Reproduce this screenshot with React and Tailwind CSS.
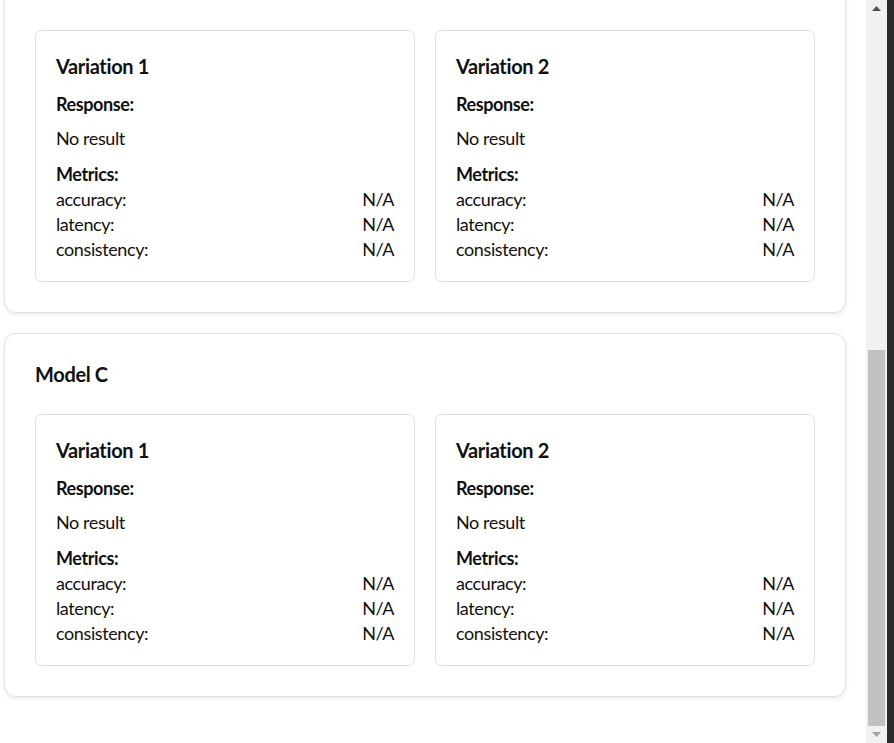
import React from "react";

const METRICS = ["accuracy", "latency", "consistency"];

function VariationCard({ title }) {
  return (
    <div className="border border-[#e3e3e3] rounded-[6px] bg-white px-[20px] pt-[23px] pb-[19px]">
      <h3 className="text-[20px] leading-[25px] font-bold tracking-[-0.35px]">{title}</h3>
      <p className="mt-[13px] font-bold">Response:</p>
      <p className="mt-[9px]">No result</p>
      <p className="mt-[11px] font-bold">Metrics:</p>
      {METRICS.map((m) => (
        <div key={m} className="flex justify-between">
          <span>{m}:</span>
          <span>N/A</span>
        </div>
      ))}
    </div>
  );
}

function ModelCard({ name }) {
  return (
    <div className="border border-[#e2e2e2] rounded-[12px] bg-white shadow-[0_2px_4px_rgba(0,0,0,0.08)] p-[30px]">
      <h2 className="text-[20px] leading-[20px] font-bold tracking-[-0.35px] mb-[30px]">{name}</h2>
      <div className="grid grid-cols-2 gap-[20px]">
        <VariationCard title="Variation 1" />
        <VariationCard title="Variation 2" />
      </div>
    </div>
  );
}

function Scrollbar() {
  return (
    <div className="w-[21px] h-full bg-[#f1f1f1] flex flex-col items-center">
      <div className="h-[17px] flex items-center justify-center">
        <svg width="9" height="5" viewBox="0 0 9 5"><path d="M0 5 L4.5 0 L9 5 Z" fill="#505050" /></svg>
      </div>
      <div className="flex-1 w-full flex flex-col justify-end px-[2px]">
        <div className="h-[376px] bg-[#c1c1c1]" />
      </div>
      <div className="h-[17px] flex items-center justify-center">
        <svg width="9" height="5" viewBox="0 0 9 5"><path d="M0 0 L9 0 L4.5 5 Z" fill="#a3a3a3" /></svg>
      </div>
    </div>
  );
}

export default function App() {
  return (
    <div className="flex h-[743px] w-[894px] bg-white text-[#111] text-[18px] leading-[25px] tracking-[-0.4px] font-['Lato',sans-serif] overflow-hidden">
      <div className="w-[866px] h-full overflow-hidden">
        {/* page is scrolled to the bottom: Model B's heading sits above the fold */}
        <div className="-mt-[51px] pl-[4px] pr-[20px] flex flex-col gap-[20px]">
          <ModelCard name="Model B" />
          <ModelCard name="Model C" />
        </div>
      </div>
      <Scrollbar />
      <div className="w-[7px] h-full bg-[#2b2b2b]" />
    </div>
  );
}
